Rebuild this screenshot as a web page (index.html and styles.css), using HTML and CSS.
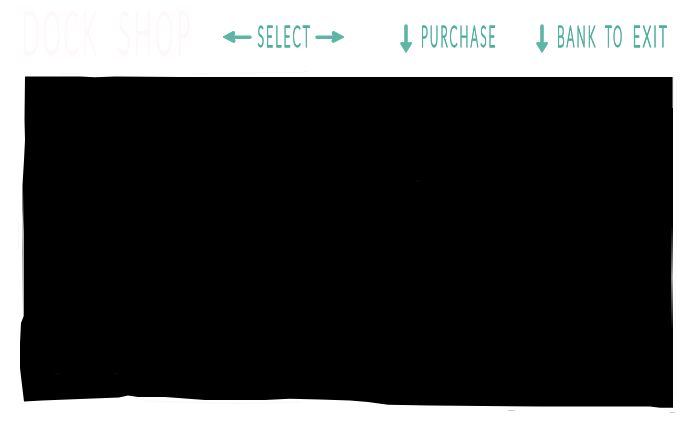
FILE: index.html
```
<!DOCTYPE html>
<html lang="en">
<head>
<meta charset="utf-8">
<title>Dock Shop</title>
<link rel="stylesheet" href="styles.css">
</head>
<body>
<header class="bar">
  <svg class="title" viewBox="0 0 180 70" width="180" height="70" role="heading">
    <g transform="scale(.4 1)">
      <text x="5" y="55" textLength="194" lengthAdjust="spacingAndGlyphs">DOCK</text>
      <text x="245" y="55" textLength="188" lengthAdjust="spacingAndGlyphs">SHOP</text>
    </g>
  </svg>
  <svg class="hint select" viewBox="0 0 128 70" width="128" height="70">
    <path class="shaft" d="M9 37.2H30M97 37.2H117"/>
    <path class="head" d="M3 37L13 31.5Q15.5 31 14.5 34L13.5 37L15 40.5Q15.500 43 13 42.200Z"/>
    <path class="head" d="M124 37L114 31.5Q111.500 31 112.500 34L113.500 37L112 40.500Q111.500 43 114 42.200Z"/>
    <g transform="scale(.42 1)">
      <text x="89" y="47" textLength="130" lengthAdjust="spacingAndGlyphs">SELECT</text>
    </g>
  </svg>
  <svg class="hint purchase" viewBox="0 0 108 70" width="108" height="70">
    <path class="shaft" d="M11 26V46"/>
    <path class="head" d="M11 52.500L5.800 44Q5 41.500 8 42.500L11 43.500L14.500 42.500Q17.300 41.500 16.300 44Z"/>
    <g transform="scale(.42 1)">
      <text x="62" y="47" textLength="182" lengthAdjust="spacingAndGlyphs">PURCHASE</text>
    </g>
  </svg>
  <svg class="hint exit" viewBox="0 0 144 70" width="144" height="70">
    <path class="shaft" d="M11 26V46"/>
    <path class="head" d="M11 52.500L5.800 44Q5 41.500 8 42.500L11 43.500L14.500 42.500Q17.300 41.500 16.300 44Z"/>
    <g transform="scale(.42 1)">
      <text x="62" y="47" textLength="96" lengthAdjust="spacingAndGlyphs">BANK</text>
      <text x="176" y="47" textLength="46" lengthAdjust="spacingAndGlyphs">TO</text>
      <text x="242" y="47" textLength="87" lengthAdjust="spacingAndGlyphs">EXIT</text>
    </g>
  </svg>
</header>
<main>
  <svg class="panel" viewBox="0 70 700 355" width="700" height="355" aria-hidden="true">
    <defs>
      <linearGradient id="fade" x1="0" y1="0" x2="0" y2="1">
        <stop offset="0" stop-color="#aaa" stop-opacity="0"/>
        <stop offset=".5" stop-color="#aaa"/>
        <stop offset="1" stop-color="#aaa" stop-opacity="0"/>
      </linearGradient>
    </defs>
    <path d="M25 76.500H80L95 77.300L115 76.600L180 77H673V407.700H660L650 406.500L540 406.500L430 405.500L388 404.700L368 402L350 400.500L320 399.500L290 398.700L265 400H205L185 398.500L165 397H138L128 395.500L119 397.500L80 399L42 400.500L24 401.500L22 385L20 368V343L21 323L23.700 316V235L22.500 210V185L24 160L25 140L24.500 120Z"/>
    <rect x="22" y="190" width="2" height="125" fill="url(#fade)"/>
    <rect x="671.200" y="225" width="1.800" height="105" fill="url(#fade)"/>
    <path class="edge" d="M672.700 77V108"/>
    <path class="trace" d="M60 73.500H80M193 73.600L240 73L300 72.500L310 70.500M676.500 80V250M675.500 250V395M18.500 221V250M21 403.500H24M145 401L195 402.500L240 403.500L300 402"/>
    <path class="mark" d="M508 410.500H515M670 412.500H675"/>
    <path class="speck" d="M55 373.500H60M114 373.300H119M416 181H421"/>
  </svg>
</main>
</body>
</html>
```
FILE: styles.css
```
body {
  margin: 0;
  background: #fff;
  font-family: Lato, "Open Sans", sans-serif;
}
.bar {
  display: flex;
  height: 70px;
  padding-left: 20px;
  will-change: transform;
}
svg {
  display: block;
  flex: none;
}
.bar svg {
  overflow: visible;
}
.title text {
  font-size: 62px;
  font-weight: 300;
  fill: #fff8f8;
  stroke: #fff8f8;
  stroke-width: 1.4px;
  stroke-linejoin: round;
  vector-effect: non-scaling-stroke;
  letter-spacing: 8px;
}
.select {
  margin-left: 20px;
}
.purchase {
  margin-left: 47px;
}
.exit {
  margin-left: 28px;
}
.hint text {
  font-size: 30px;
  font-weight: 300;
  fill: #4fae9d;
  stroke: #4fae9d;
  stroke-width: 1px;
  stroke-linejoin: round;
  vector-effect: non-scaling-stroke;
  letter-spacing: 5px;
}
.shaft {
  fill: none;
  stroke: #5cb5a5;
  stroke-width: 3.6px;
  stroke-linecap: round;
}
.head {
  fill: #5cb5a5;
  stroke: #5cb5a5;
  stroke-width: 1px;
  stroke-linejoin: round;
}
.edge {
  stroke: #999;
  stroke-width: 0.8px;
}
.trace {
  fill: none;
  stroke: #f8f8f8;
}
.mark {
  stroke: #ccc;
}
.speck {
  stroke: #0c0c0c;
}
```
